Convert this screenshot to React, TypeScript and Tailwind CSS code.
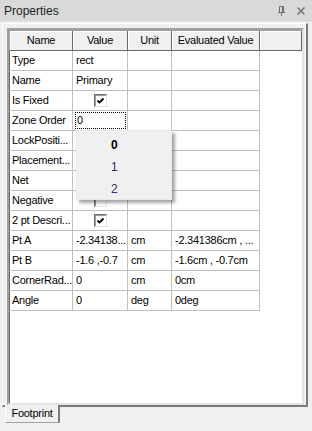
import React from "react";

type Row = {
  name: string;
  value?: string;
  unit?: string;
  evald?: string;
  check?: boolean;
  focus?: boolean;
};

const rows: Row[] = [
  { name: "Type", value: "rect" },
  { name: "Name", value: "Primary" },
  { name: "Is Fixed", check: true },
  { name: "Zone Order", value: "0", focus: true },
  { name: "LockPositi..." },
  { name: "Placement..." },
  { name: "Net" },
  { name: "Negative", check: false },
  { name: "2 pt Descri...", check: true },
  { name: "Pt A", value: "-2.34138...", unit: "cm", evald: "-2.341386cm , ..." },
  { name: "Pt B", value: "-1.6 ,-0.7", unit: "cm", evald: "-1.6cm , -0.7cm" },
  { name: "CornerRad...", value: "0", unit: "cm", evald: "0cm" },
  { name: "Angle", value: "0", unit: "deg", evald: "0deg" },
];

function CheckBox({ checked }: { checked: boolean }) {
  return (
    <div className="w-[13px] h-[13px] bg-white border border-t-[#6b6b6b] border-l-[#6b6b6b] border-r-[#e3e3e3] border-b-[#e3e3e3] shadow-[inset_1px_1px_0_#a0a0a0] flex items-center justify-center">
      {checked && (
        <svg width="9" height="9" viewBox="0 0 9 9">
          <polyline points="1.5,4.5 3.5,6.5 7.5,2.5" fill="none" stroke="#000" strokeWidth="1.8" />
        </svg>
      )}
    </div>
  );
}

function HeaderCell({ w, children }: { w: string; children?: React.ReactNode }) {
  return (
    <div
      className={`${w} h-full flex items-center justify-center bg-[#f0f0f0] border-r border-b border-[#696969] shadow-[inset_1px_1px_0_#ffffff]`}
    >
      {children}
    </div>
  );
}

export default function App() {
  return (
    <div className="w-[312px] h-[431px] bg-[#f0f0f0] flex flex-col font-['Liberation_Sans',Arial,sans-serif] text-[11px] tracking-[-0.25px] text-black overflow-hidden">
      {/* title bar */}
      <div className="h-[22px] bg-[#d9d9d9] flex items-center justify-between pl-[4px] pr-[7px] border-b border-[#e4e4e4]">
        <span className="text-[12px] tracking-normal text-[#1e1e1e]">Properties</span>
        <div className="flex items-center gap-[11px] pt-[1px]">
          <svg width="9" height="10" viewBox="0 0 9 10">
            <path d="M2.5 0.5h4v6h-4z M1 6.5h7 M4.5 6.5v3.5" fill="none" stroke="#6e6e6e" strokeWidth="1" />
            <path d="M5.5 1v5" stroke="#6e6e6e" strokeWidth="1" />
          </svg>
          <svg width="8" height="8" viewBox="0 0 8 8">
            <path d="M0.5 0.5l7 7M7.5 0.5l-7 7" stroke="#6e6e6e" strokeWidth="1.4" />
          </svg>
        </div>
      </div>

      {/* tab page */}
      <div className="mt-[1px] ml-[2px] w-[306px] border-l border-t border-l-white border-t-white border-r-2 border-b-2 border-r-[#7a7a7a] border-b-[#7a7a7a] pl-[4px] pr-[2px] pt-[4px]">
        <div className="h-[377px] bg-white border-2 border-t-[#a0a0a0] border-l-[#a0a0a0] border-r-[#e3e3e3] border-b-[#e3e3e3] shadow-[inset_1px_1px_0_#696969]">
          {/* header */}
          <div className="flex h-[21px] border-t border-l border-[#a0a0a0]">
            <HeaderCell w="w-[63px]">Name</HeaderCell>
            <HeaderCell w="w-[55px]">Value</HeaderCell>
            <HeaderCell w="w-[44px]">Unit</HeaderCell>
            <HeaderCell w="w-[88px]">Evaluated Value</HeaderCell>
            <HeaderCell w="w-[42px]" />
          </div>

          {rows.map((r) => (
            <div key={r.name} className="relative flex h-[20px] w-[251px]">
              <div className="w-[64px] h-full flex items-center pl-[3px] border-r border-b border-[#c0c0c0] whitespace-nowrap overflow-hidden">
                {r.name}
              </div>
              <div className="w-[55px] h-full flex items-center border-r border-b border-[#c0c0c0] whitespace-nowrap overflow-hidden">
                {r.check !== undefined ? (
                  <div className="w-full flex justify-center">
                    <CheckBox checked={r.check} />
                  </div>
                ) : r.focus ? (
                  <div className="ml-[2px] w-[51px] h-[17px] border border-dotted border-black flex items-center pl-[1px]">
                    {r.value}
                  </div>
                ) : (
                  <span className="pl-[3px]">{r.value}</span>
                )}
              </div>
              <div className="w-[44px] h-full flex items-center pl-[3px] border-r border-b border-[#c0c0c0] whitespace-nowrap overflow-hidden">
                {r.unit}
              </div>
              <div className="w-[88px] h-full flex items-center pl-[3px] border-r border-b border-[#c0c0c0] whitespace-nowrap overflow-hidden">
                {r.evald}
              </div>

              {r.focus && (
                <div className="absolute left-[67px] top-[19px] z-10 w-[96px] h-[70px] bg-[#f0f0f0] border border-[#e8e8e8] shadow-[3px_3px_3px_rgba(0,0,0,0.35)] pt-[3px] pl-[34px] text-[12px] tracking-normal">
                  <div className="h-[22px] flex items-center font-bold">0</div>
                  <div className="h-[22px] flex items-center text-[#3a2a6a]">1</div>
                  <div className="h-[22px] flex items-center text-[#3a2a6a]">2</div>
                </div>
              )}
            </div>
          ))}
        </div>
      </div>

      {/* bottom tab */}
      <div className="relative z-10 -mt-[2px] ml-[5px] w-[55px] h-[18px] bg-[#f0f0f0] border-l border-l-white border-r-2 border-r-[#7a7a7a] border-b border-b-[#a0a0a0] flex items-center justify-center">
        Footprint
      </div>
    </div>
  );
}
